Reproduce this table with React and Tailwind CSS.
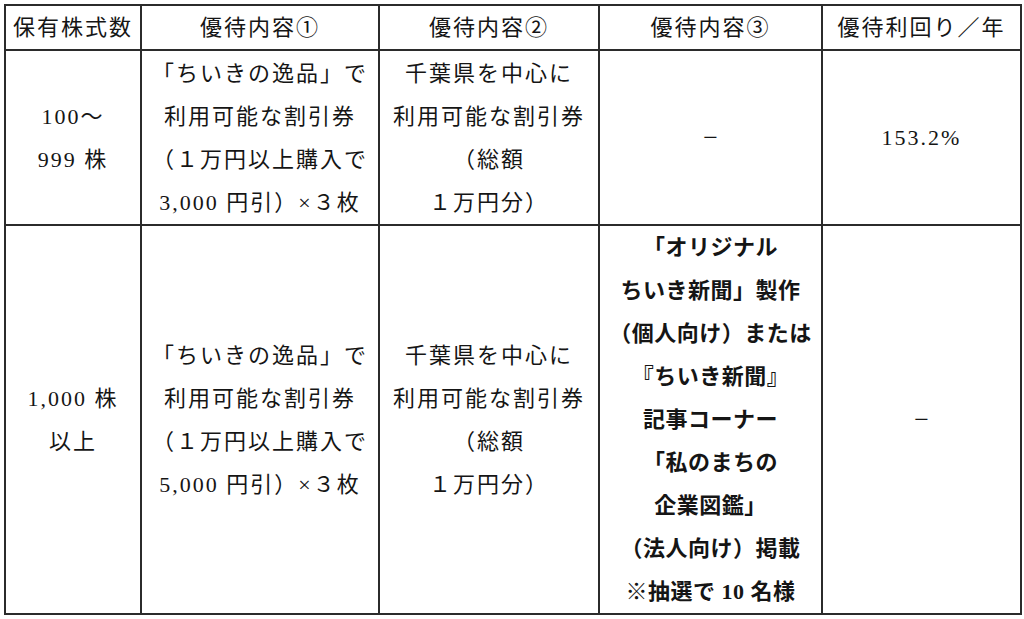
const cell = 'border-2 border-[#2b2b2b] p-0 align-middle text-center'

const rows = [
  {
    h: 'h-[175px]',
    cols: [
      ['100〜', '999 株'],
      ['「ちいきの逸品」で', '利用可能な割引券', '（１万円以上購入で', '3,000 円引）×３枚'],
      ['千葉県を中心に', '利用可能な割引券', '（総額', '１万円分）'],
      ['−'],
      ['153.2%'],
    ],
  },
  {
    h: 'h-[389px]',
    cols: [
      ['1,000 株', '以上'],
      ['「ちいきの逸品」で', '利用可能な割引券', '（１万円以上購入で', '5,000 円引）×３枚'],
      ['千葉県を中心に', '利用可能な割引券', '（総額', '１万円分）'],
      [
        '「オリジナル',
        'ちいき新聞」製作',
        '（個人向け）または',
        '『ちいき新聞』',
        '記事コーナー',
        '「私のまちの',
        '企業図鑑」',
        '（法人向け）掲載',
        '※抽選で 10 名様',
      ],
      ['−'],
    ],
  },
]

const headers = ['保有株式数', '優待内容①', '優待内容②', '優待内容③', '優待利回り／年']

function App() {
  return (
    <div className="min-h-screen bg-white pl-[4px] pt-[4px] text-[#151515] font-['Liberation_Serif','Noto_Sans_CJK_JP',serif]">
      <table className="w-[1016px] table-fixed border-collapse text-[22px] leading-[43px] tracking-[2px]">
        <colgroup>
          <col className="w-[136px]" />
          <col className="w-[238px]" />
          <col className="w-[220px]" />
          <col className="w-[223px]" />
          <col className="w-[199px]" />
        </colgroup>
        <thead>
          <tr className="h-[45px]">
            {headers.map((h) => (
              <th key={h} className={`${cell} font-normal`}>
                {h}
              </th>
            ))}
          </tr>
        </thead>
        <tbody>
          {rows.map((row, ri) => (
            <tr key={ri} className={row.h}>
              {row.cols.map((lines, ci) => (
                <td
                  key={ci}
                  className={`${cell} ${ri === 1 && ci === 3 ? 'font-bold tracking-[0.5px]' : ''}`}
                >
                  {lines.map((l, li) =>
                    l === '−' ? (
                      <div key={li} className="text-[26px] tracking-normal">
                        {l}
                      </div>
                    ) : (
                      <div key={li} className="whitespace-nowrap">
                        {l}
                      </div>
                    )
                  )}
                </td>
              ))}
            </tr>
          ))}
        </tbody>
      </table>
    </div>
  )
}

export default App
